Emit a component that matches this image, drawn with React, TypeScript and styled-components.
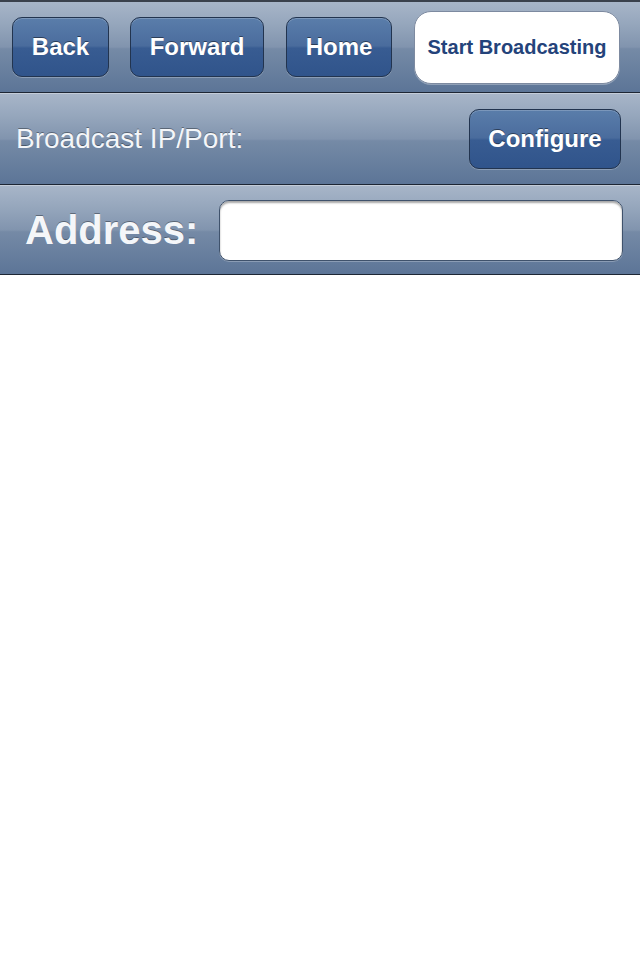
import React from "react";
import styled, { createGlobalStyle } from "styled-components";

const Global = createGlobalStyle`
  html, body { margin: 0; padding: 0; background: #ffffff; }
  body { font-family: "Liberation Sans", Arial, sans-serif; }
`;

const Page = styled.div`
  width: 640px;
  min-height: 960px;
  background: #ffffff;
  display: flex;
  flex-direction: column;
`;

const Bar = styled.div<{ $h: number; $top?: boolean; $pl: number; $pr: number }>`
  height: ${(p) => p.$h}px;
  box-sizing: border-box;
  display: flex;
  align-items: center;
  padding: 0 ${(p) => p.$pr}px 0 ${(p) => p.$pl}px;
  background: linear-gradient(
    to bottom,
    #a7b5c8 0%,
    #95a6bc 25%,
    #8194ae 50%,
    #758aa6 52%,
    #5c7597 100%
  );
  border-top: ${(p) => (p.$top ? "2px solid #3a414c" : "1px solid #c3ccd8")};
  border-bottom: 1px solid #1d2634;
`;

const Btn = styled.button<{ $w: number }>`
  width: ${(p) => p.$w}px;
  height: 60px;
  box-sizing: border-box;
  border: 1px solid #22344f;
  border-radius: 10px;
  background: linear-gradient(
    to bottom,
    #5a7daa 0%,
    #4a6c9d 48%,
    #385c92 52%,
    #30548b 100%
  );
  box-shadow: 0 1px 0 rgba(255, 255, 255, 0.25), inset 0 1px 0 rgba(255, 255, 255, 0.2);
  color: #ffffff;
  font-family: "Liberation Sans", Arial, sans-serif;
  font-weight: bold;
  font-size: 24px;
  text-shadow: 0 -1px 0 rgba(0, 0, 0, 0.45);
  padding: 0;
  flex: none;
`;

const Gap = styled.div<{ $w: number }>`
  width: ${(p) => p.$w}px;
  flex: none;
`;

const Spacer = styled.div`
  flex: 1;
`;

const WhiteBtn = styled.button`
  width: 206px;
  height: 73px;
  box-sizing: border-box;
  border: 1px solid #7d8aa0;
  border-radius: 17px;
  background: #ffffff;
  color: #24437a;
  font-family: "Liberation Sans", Arial, sans-serif;
  font-weight: bold;
  font-size: 20px;
  padding: 0;
  flex: none;
  box-shadow: 0 1px 0 rgba(255, 255, 255, 0.3);
`;

const Label = styled.span<{ $size: number; $bold?: boolean }>`
  color: #f4f6f9;
  font-size: ${(p) => p.$size}px;
  font-weight: ${(p) => (p.$bold ? "bold" : "normal")};
  text-shadow: 0 -1px 0 rgba(0, 0, 0, 0.35);
  flex: none;
`;

const Input = styled.input`
  width: 404px;
  height: 61px;
  box-sizing: border-box;
  border: 1px solid #3f526c;
  border-radius: 10px;
  background: #ffffff;
  box-shadow: inset 0 2px 2px rgba(0, 0, 0, 0.35), 0 1px 0 rgba(255, 255, 255, 0.25);
  font-family: "Liberation Sans", Arial, sans-serif;
  font-size: 24px;
  padding: 0 10px;
  outline: none;
  flex: none;
`;

export default function App() {
  return (
    <Page>
      <Global />
      <Bar $h={93} $top $pl={12} $pr={20}>
        <Btn $w={97}>Back</Btn>
        <Gap $w={21} />
        <Btn $w={134}>Forward</Btn>
        <Gap $w={22} />
        <Btn $w={106}>Home</Btn>
        <Spacer />
        <WhiteBtn>Start Broadcasting</WhiteBtn>
      </Bar>
      <Bar $h={92} $pl={16} $pr={19}>
        <Label $size={28}>Broadcast IP/Port:</Label>
        <Spacer />
        <Btn $w={152}>Configure</Btn>
      </Bar>
      <Bar $h={90} $pl={25} $pr={17}>
        <Label $size={40} $bold>
          Address:
        </Label>
        <Spacer />
        <Input />
      </Bar>
    </Page>
  );
}
